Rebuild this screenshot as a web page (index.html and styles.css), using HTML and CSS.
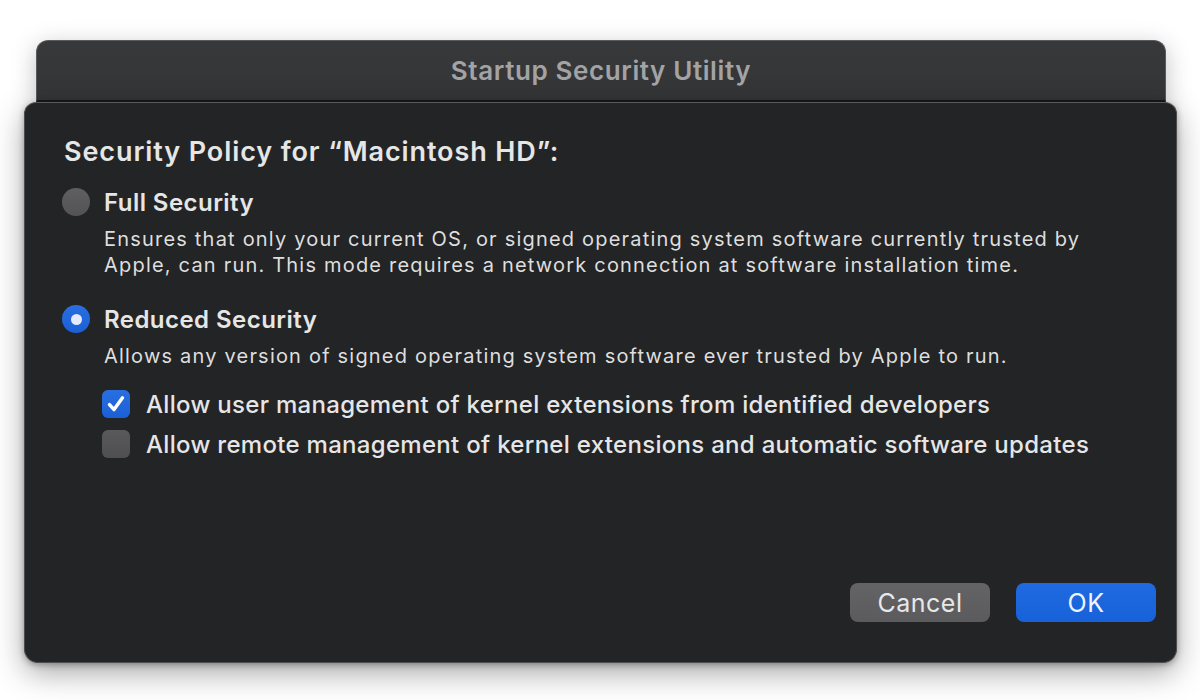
FILE: index.html
```html
<!DOCTYPE html>
<html lang="en">
<head>
<meta charset="utf-8">
<title>Startup Security Utility</title>
<link rel="stylesheet" href="styles.css">
</head>
<body>
<div class="stage">
  <div class="window">
    <div class="titlebar">Startup Security Utility</div>
  </div>
  <div class="sheet">
    <h1 class="heading">Security Policy for “Macintosh HD”:</h1>

    <div class="option">
      <div class="option-row">
        <span class="radio"></span>
        <span class="option-label">Full Security</span>
      </div>
      <p class="desc">Ensures that only your current OS, or signed operating system software currently trusted by<br>Apple, can run. This mode requires a network connection at software installation time.</p>
    </div>

    <div class="option option-second">
      <div class="option-row">
        <span class="radio radio-on"><span class="radio-dot"></span></span>
        <span class="option-label">Reduced Security</span>
      </div>
      <p class="desc">Allows any version of signed operating system software ever trusted by Apple to run.</p>
      <div class="checks">
        <div class="check-row">
          <span class="checkbox checkbox-on">
            <svg viewBox="0 0 28 28" width="28" height="28"><path d="M7.5 14.6 L12 19.6 L20.5 7.8" fill="none" stroke="#ffffff" stroke-width="3.4" stroke-linecap="round" stroke-linejoin="round"/></svg>
          </span>
          <span class="check-label">Allow user management of kernel extensions from identified developers</span>
        </div>
        <div class="check-row">
          <span class="checkbox"></span>
          <span class="check-label">Allow remote management of kernel extensions and automatic software updates</span>
        </div>
      </div>
    </div>

    <div class="buttons">
      <button class="btn btn-cancel">Cancel</button>
      <button class="btn btn-ok">OK</button>
    </div>
  </div>
</div>
</body>
</html>
```
FILE: styles.css
```css
* { box-sizing: border-box; }
html, body { margin: 0; padding: 0; }
body {
  background: #ffffff;
  width: 1200px;
  height: 700px;
  overflow: hidden;
  font-family: Inter, "Noto Sans", "Liberation Sans", sans-serif;
}
.stage {
  padding-top: 40px;
}
.window {
  margin: 0 34px 0 36px;
  border-radius: 12px 12px 0 0;
  box-shadow: 0 6px 24px rgba(0,0,0,0.25);
}
.titlebar {
  height: 62px;
  background: linear-gradient(#37383a, #343537);
  border: 1px solid #5a5b5d;
  border-bottom: 2px solid #18181a;
  border-radius: 12px 12px 0 0;
  color: #a3a3a5;
  font-size: 26px;
  font-weight: 600;
  text-align: center;
  line-height: 60px;
  letter-spacing: 0.6px;
}
.sheet {
  margin: 0 23px 0 24px;
  height: 561px;
  background: #232426;
  border: 1px solid #4d4e50;
  border-top-color: #5a5b5d;
  border-radius: 12px 12px 14px 14px;
  box-shadow: 0 10px 30px rgba(0,0,0,0.35), 0 2px 6px rgba(0,0,0,0.3);
  padding: 35px 20px 40px 39px;
  display: flex;
  flex-direction: column;
  color: #e6e6e7;
}
.heading {
  margin: 0;
  font-size: 27px;
  font-weight: 600;
  line-height: 28px;
  letter-spacing: 0.9px;
}
.option {
  margin-top: 22px;
}
.option-second {
  margin-top: 27px;
}
.option-row {
  display: flex;
  align-items: center;
  height: 28px;
}
.radio {
  width: 28px;
  height: 28px;
  border-radius: 50%;
  background: linear-gradient(#5f5f61, #535355);
  margin-left: -2px;
  margin-right: 14px;
  flex: none;
  display: flex;
  align-items: center;
  justify-content: center;
}
.radio-on {
  background: linear-gradient(#2a6fe0, #1a5fd6);
}
.radio-dot {
  width: 11px;
  height: 11px;
  border-radius: 50%;
  background: #e2eafb;
}
.option-label {
  font-size: 24px;
  font-weight: 600;
  letter-spacing: 0.45px;
}
.desc {
  margin: 10px 0 0 40px;
  font-size: 20px;
  line-height: 26px;
  color: #dedede;
  letter-spacing: 1.2px;
  white-space: nowrap;
}
.checks {
  margin: 21px 0 0 38px;
  display: flex;
  flex-direction: column;
  gap: 12px;
}
.check-row {
  display: flex;
  align-items: center;
  height: 28px;
}
.checkbox {
  width: 28px;
  height: 28px;
  border-radius: 6px;
  background: linear-gradient(#59595b, #4f4f51);
  margin-right: 16px;
  flex: none;
  display: flex;
}
.checkbox-on {
  background: linear-gradient(#2a6fe0, #1a5fd6);
}
.check-label {
  font-size: 24px;
  font-weight: 500;
  letter-spacing: 0.3px;
  white-space: nowrap;
}
.buttons {
  margin-top: auto;
  display: flex;
  justify-content: flex-end;
  gap: 26px;
}
.btn {
  width: 140px;
  height: 39px;
  border: none;
  border-radius: 8px;
  font-family: inherit;
  font-size: 25px;
  color: #e8e8e8;
  letter-spacing: 0.5px;
  padding: 0;
}
.btn-cancel {
  background: linear-gradient(#646466, #5b5b5d);
}
.btn-ok {
  background: linear-gradient(#1f6ae0, #1762d9);
  color: #f0f3fa;
}
```
